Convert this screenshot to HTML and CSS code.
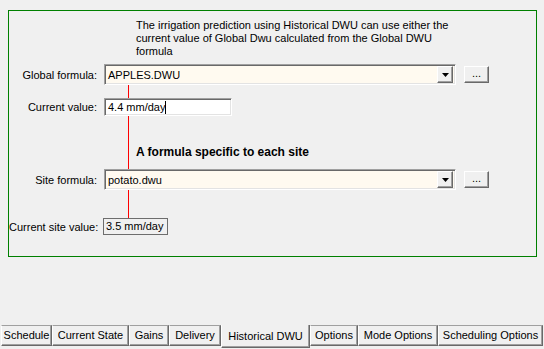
FILE: index.html
```html
<!DOCTYPE html>
<html lang="en">
  <head>
    <meta charset="UTF-8" />
    <title>Historical DWU</title>
    <link rel="stylesheet" href="styles.css">
  </head>
  <body>
    <div class="panel">
      <p class="intro">
        The irrigation prediction using Historical DWU can use either the
        current value of Global Dwu calculated from the Global DWU formula
      </p>

      <!-- Global formula -->
      <div class="row">
        <label class="label">Global formula:</label>
        <div class="combo">
          <span class="combo-text">APPLES.DWU</span>
          <span class="combo-btn">
            <svg width="7" height="4" viewBox="0 0 7 4"><polygon points="0,0 7,0 3.5,4" fill="#000"/></svg>
          </span>
        </div>
        <button class="dots">...</button>
      </div>
      <div class="link link-short"></div>

      <div class="row">
        <label class="label">Current value:</label>
        <div class="edit">4.4 mm/day<span class="caret"></span></div>
      </div>
      <div class="link link-note">
        <span class="note">A formula specific to each site</span>
      </div>

      <!-- Site formula -->
      <div class="row">
        <label class="label">Site formula:</label>
        <div class="combo">
          <span class="combo-text">potato.dwu</span>
          <span class="combo-btn">
            <svg width="7" height="4" viewBox="0 0 7 4"><polygon points="0,0 7,0 3.5,4" fill="#000"/></svg>
          </span>
        </div>
        <button class="dots">...</button>
      </div>
      <div class="link link-long"></div>

      <div class="row">
        <label class="label">Current site value:</label>
        <div class="value">3.5 mm/day</div>
      </div>
    </div>

    <!-- Tabs -->
    <div class="tabs">
      <div class="tab tab-schedule">Schedule</div>
      <div class="tab tab-state">Current State</div>
      <div class="tab tab-gains">Gains</div>
      <div class="tab tab-delivery">Delivery</div>
      <div class="tab tab-history active">Historical DWU</div>
      <div class="tab tab-options">Options</div>
      <div class="tab tab-mode">Mode Options</div>
      <div class="tab tab-scheduling">Scheduling Options</div>
    </div>
  </body>
</html>
```

FILE: styles.css
```css
/* Basic Styles */
body {
  margin: 0;
  height: 349px;
  display: flex;
  flex-direction: column;
  background-color: #f0f0f0;
  font-family: "Liberation Sans", Arial, sans-serif;
  font-size: 11px;
  color: #000;
  overflow: hidden;
}

.panel {
  box-sizing: border-box;
  margin: 10px 0 0 8px;
  width: 529px;
  height: 247px;
  border: 1px solid #008000;
}

.intro {
  margin: 8px 0 0 127px;
  width: 318px;
  line-height: 13px;
}

.row {
  display: flex;
  align-items: center;
}

.label {
  width: 88px;
  margin-right: 7px;
  text-align: right;
  white-space: nowrap;
}

.intro + .row {
  margin-top: 6px;
}

/* Combo box */
.combo {
  box-sizing: border-box;
  width: 352px;
  height: 21px;
  display: flex;
  align-items: center;
  background-color: #fffaf0;
  border: 1px solid;
  border-color: #a0a0a0 #fff #fff #a0a0a0;
  box-shadow: inset 1px 1px #696969, inset -1px -1px #e3e3e3;
  padding: 2px 2px 2px 3px;
}

.combo-text {
  flex: 1;
}

.combo-btn {
  box-sizing: border-box;
  width: 16px;
  height: 17px;
  display: flex;
  align-items: center;
  justify-content: center;
  background-color: #f0f0f0;
  border: 1px solid;
  border-color: #fff #696969 #696969 #fff;
  box-shadow: inset -1px -1px #a0a0a0;
}

.dots {
  box-sizing: border-box;
  margin-left: 8px;
  width: 25px;
  height: 17px;
  padding: 0 0 3px;
  font: inherit;
  background-color: #f0f0f0;
  border: 1px solid;
  border-color: #fff #696969 #696969 #fff;
  box-shadow: inset -1px -1px #a0a0a0;
}

/* Edit boxes */
.edit {
  box-sizing: border-box;
  width: 128px;
  height: 18px;
  display: flex;
  align-items: center;
  padding-left: 3px;
  background-color: #fff;
  border: 1px solid;
  border-color: #a0a0a0 #fff #fff #a0a0a0;
  box-shadow: inset 1px 1px #696969, inset -1px -1px #e3e3e3;
}

.caret {
  width: 1px;
  height: 13px;
  background-color: #000;
}

.value {
  box-sizing: border-box;
  margin-left: -1px;
  width: 65px;
  height: 17px;
  padding-left: 2px;
  line-height: 15px;
  white-space: nowrap;
  border: 1px solid #6d6d6d;
}

/* Red connector */
.link {
  margin-left: 119px;
  border-left: 1px solid #ff0000;
}

.link-short {
  height: 13px;
}

.link-note {
  box-sizing: border-box;
  height: 53px;
  padding: 29px 0 0 7px;
}

.link-long {
  height: 28px;
}

.note {
  font-weight: bold;
  font-size: 12px;
}

/* Tabs */
.tabs {
  margin-top: auto;
  margin-bottom: 1px;
  padding-left: 1px;
  display: flex;
  align-items: flex-start;
  height: 23px;
}

.tab {
  box-sizing: border-box;
  height: 21px;
  line-height: 19px;
  text-align: center;
  white-space: nowrap;
  border-top: 1px solid #a0a0a0;
  border-left: 1px solid #fff;
  border-right: 1px solid #696969;
  border-bottom: 1px solid #696969;
  box-shadow: inset -1px -1px #a0a0a0;
}

.tab.active {
  height: 23px;
  line-height: 22px;
  border-top: none;
}

.tab-schedule { width: 51px; }
.tab-state { width: 77px; }
.tab-gains { width: 40px; }
.tab-delivery { width: 52px; }
.tab-history { width: 89px; }
.tab-options { width: 48px; }
.tab-mode { width: 80px; }
.tab-scheduling { width: 105px; }
```
